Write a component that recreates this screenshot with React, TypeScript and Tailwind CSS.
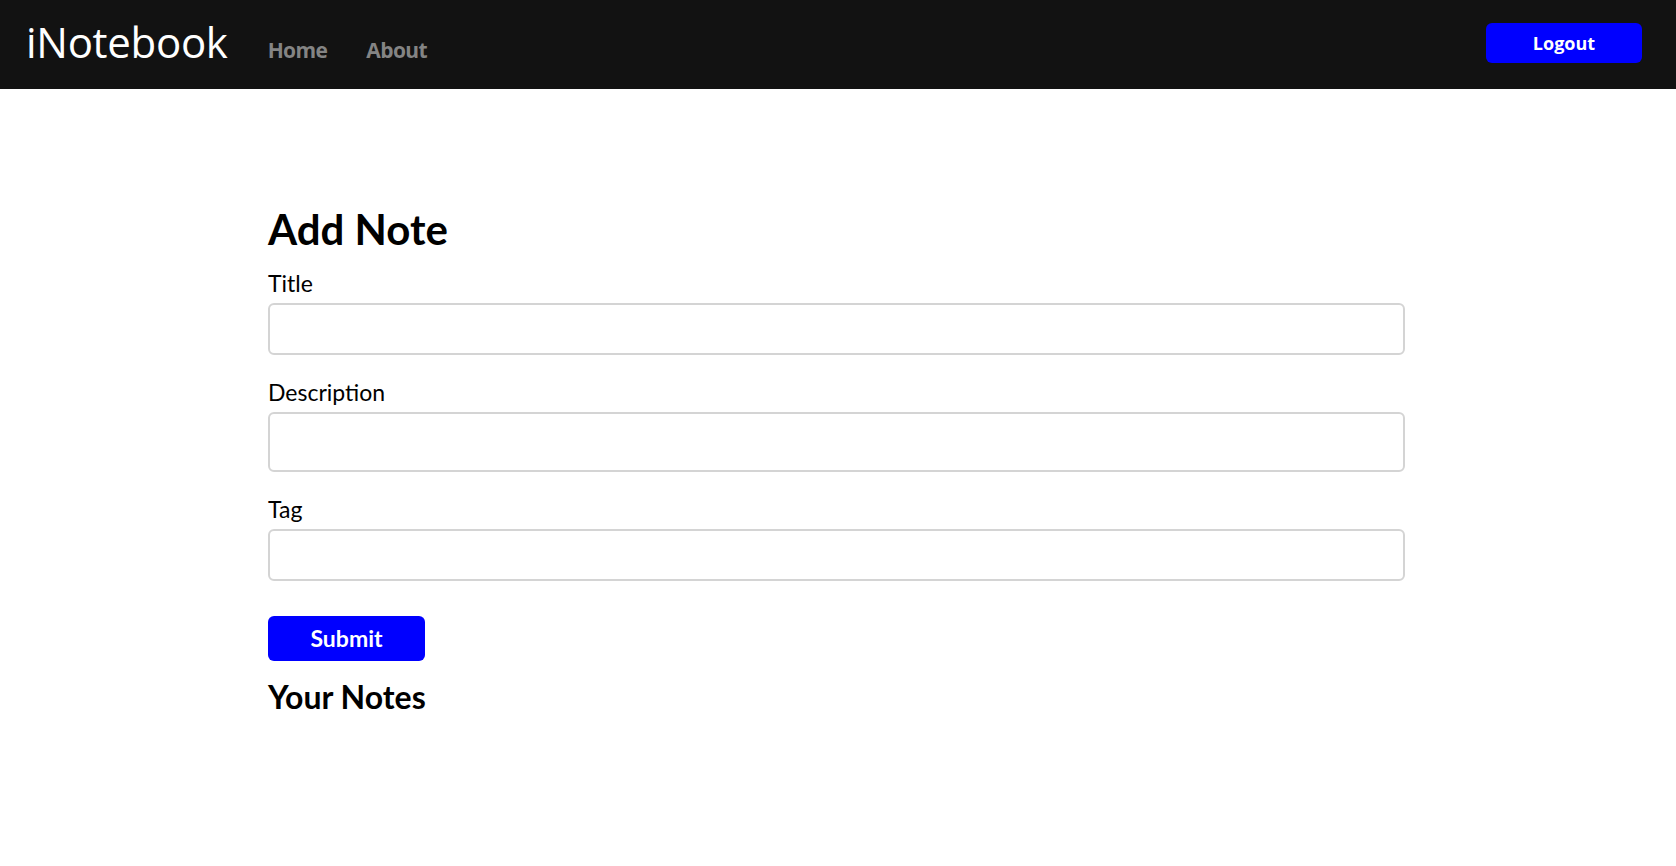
import * as React from "react";

function Navbar() {
    return (
        <nav className="flex h-[89px] items-start bg-[#121212] pl-[26px] pr-[34px]">
            <div className="mt-[21px] flex items-baseline">
                <a className="font-['Open_Sans',sans-serif] text-[42px] leading-none tracking-[-0.3px] text-white">iNotebook</a>
                <div className="ml-[40px] flex gap-[39px] font-['Open_Sans',sans-serif] text-[21px] font-bold leading-none tracking-[-0.6px] text-[#848484]">
                    <a>Home</a>
                    <a>About</a>
                </div>
            </div>
            <button className="ml-auto mt-[23px] h-[40px] w-[156px] rounded-[6px] bg-[#0000ff] font-['Open_Sans',sans-serif] text-[18px] font-bold text-white">
                Logout
            </button>
        </nav>
    )
}

function Field({label, height}: {label: string; height: string}) {
    return (
        <div className="flex flex-col">
            <label className="mb-[6px] text-[23px] leading-[28px]">{label}</label>
            <input className={`w-full ${height} rounded-[6px] border-2 border-[#d4d4d4] outline-none`}/>
        </div>
    )
}

export default function App() {
    return (
        <div className="min-h-screen bg-white font-['Lato',sans-serif] text-black">
            <Navbar/>
            <main className="ml-[268px] w-[1137px] pt-[115px]">
                <h1 className="mb-[15px] text-[42px] font-bold leading-[50px]">Add Note</h1>
                <div className="flex flex-col gap-[23px]">
                    <Field label="Title" height="h-[52px]"/>
                    <Field label="Description" height="h-[60px]"/>
                    <Field label="Tag" height="h-[52px]"/>
                </div>
                <button className="mt-[35px] h-[45px] w-[157px] rounded-[6px] bg-[#0000ff] text-[23px] font-bold text-white">
                    Submit
                </button>
                <h2 className="mt-[16px] text-[32px] font-bold leading-[40px]">Your Notes</h2>
            </main>
        </div>
    )
}
